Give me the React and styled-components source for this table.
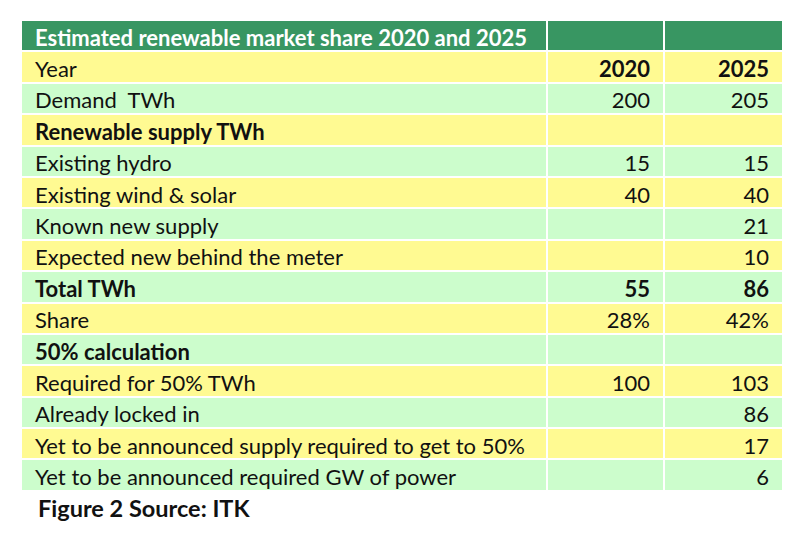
import React from 'react';
import styled, { createGlobalStyle } from 'styled-components';

const GlobalStyle = createGlobalStyle`
  html, body {
    margin: 0;
    padding: 0;
    background: #ffffff;
  }
  body {
    font-family: Lato, 'Open Sans', sans-serif;
    color: #111111;
  }
`;

const COLORS = {
  head: '#389662',
  yellow: '#fffa92',
  green: '#ccfdcc',
};

const Page = styled.div`
  width: 800px;
  height: 537px;
  padding: 21px 0 0 22px;
  box-sizing: border-box;
`;

const Table = styled.div`
  display: flex;
  flex-direction: column;
  gap: 2px;
  width: 760px;
`;

const Row = styled.div`
  display: grid;
  grid-template-columns: 524px 115px 117px;
  column-gap: 2px;
  height: 29.4px;
`;

const Cell = styled.div`
  background: ${(p) => COLORS[p.$tone]};
  display: flex;
  align-items: center;
  justify-content: ${(p) => (p.$num ? 'flex-end' : 'flex-start')};
  padding: 3px ${(p) => (p.$num ? '13px' : '0')} 0 ${(p) => (p.$num ? '0' : '13px')};
  font-size: 22px;
  font-weight: ${(p) => (p.$bold ? 700 : 400)};
  color: ${(p) => (p.$tone === 'head' ? '#ffffff' : '#111111')};
  white-space: pre;
  overflow: hidden;
`;

const Caption = styled.div`
  margin: 4px 0 0 16px;
  font-size: 23.5px;
  font-weight: 700;
  color: #111111;
`;

const rows = [
  { label: 'Year', a: '2020', b: '2025', tone: 'yellow', boldNums: true },
  { label: 'Demand  TWh', a: '200', b: '205', tone: 'green' },
  { label: 'Renewable supply TWh', tone: 'yellow', bold: true },
  { label: 'Existing hydro', a: '15', b: '15', tone: 'green' },
  { label: 'Existing wind & solar', a: '40', b: '40', tone: 'yellow' },
  { label: 'Known new supply', b: '21', tone: 'green' },
  { label: 'Expected new behind the meter', b: '10', tone: 'yellow' },
  { label: 'Total TWh', a: '55', b: '86', tone: 'green', bold: true, boldNums: true },
  { label: 'Share', a: '28%', b: '42%', tone: 'yellow' },
  { label: '50% calculation', tone: 'green', bold: true },
  { label: 'Required for 50% TWh', a: '100', b: '103', tone: 'yellow' },
  { label: 'Already locked in', b: '86', tone: 'green' },
  { label: 'Yet to be announced supply required to get to 50%', b: '17', tone: 'yellow' },
  { label: 'Yet to be announced required GW of power', b: '6', tone: 'green' },
];

export default function App() {
  return (
    <>
      <GlobalStyle />
      <Page>
        <Table>
          <Row>
            <Cell $tone="head" $bold>
              Estimated renewable market share 2020 and 2025
            </Cell>
            <Cell $tone="head" />
            <Cell $tone="head" />
          </Row>
          {rows.map((r, i) => (
            <Row key={i}>
              <Cell $tone={r.tone} $bold={r.bold}>
                {r.label}
              </Cell>
              <Cell $tone={r.tone} $num $bold={r.boldNums}>
                {r.a}
              </Cell>
              <Cell $tone={r.tone} $num $bold={r.boldNums}>
                {r.b}
              </Cell>
            </Row>
          ))}
        </Table>
        <Caption>Figure 2 Source: ITK</Caption>
      </Page>
    </>
  );
}
